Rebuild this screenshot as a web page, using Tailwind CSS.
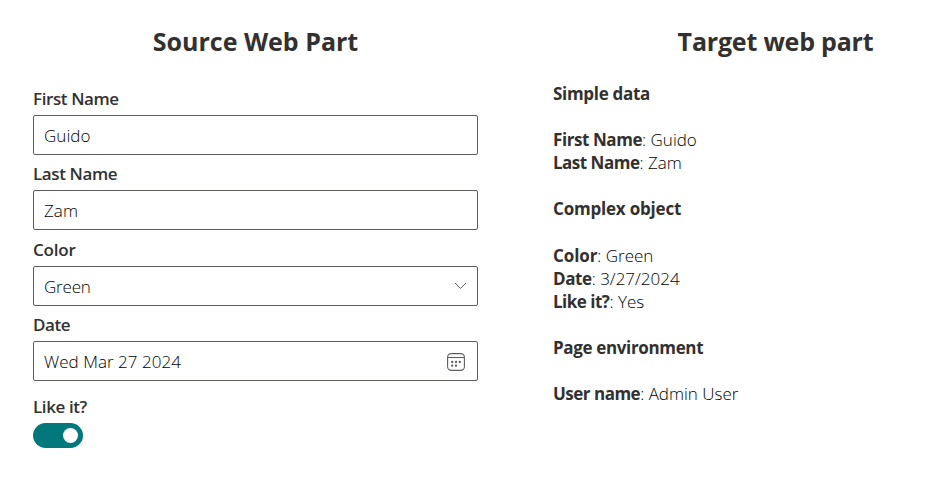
<!DOCTYPE html>
<html lang="en"><head><meta charset="utf-8"><title>Web parts</title>
<script src="https://cdn.jsdelivr.net/npm/@tailwindcss/browser@4"></script></head>
<body class="bg-white font-['Open_Sans','Noto_Sans',sans-serif] text-[#323130]">
<main class="flex h-[482px] w-[938px] overflow-hidden text-[17px]">
<section class="ml-[33px] w-[445px] shrink-0 pt-[23px]">
<h1 class="mb-[21px] text-center text-[25px] leading-[36px] font-bold whitespace-nowrap">Source Web Part</h1>
<form>
<label class="block h-[35px] pt-[7px] leading-[24px] font-semibold tracking-[-0.4px]" for="first">First Name</label>
<input id="first" value="Guido" class="block h-[40px] w-full rounded-[2px] border border-[#605e5c] px-[10px] font-light tracking-[0.05px] text-black">
<label class="block h-[35px] pt-[7px] leading-[24px] font-semibold tracking-[-0.4px]" for="last">Last Name</label>
<input id="last" value="Zam" class="block h-[40px] w-full rounded-[2px] border border-[#605e5c] px-[10px] font-light tracking-[0.05px] text-black">
<div class="h-[36px] pt-[8px] leading-[24px] font-semibold tracking-[-0.2px]">Color</div>
<div class="flex h-[40px] items-center justify-between rounded-[2px] border border-[#605e5c] px-[10px] font-light tracking-[-0.2px] text-black"><span class="pt-px">Green</span>
<svg width="13" height="8" viewBox="0 0 13 8" fill="none" stroke="#605e5c"><path d="M1 1l5.5 5.5L12 1"/></svg></div>
<div class="h-[35px] pt-[7px] leading-[24px] font-semibold tracking-[-0.4px]">Date</div>
<div class="flex h-[40px] items-center justify-between rounded-[2px] border border-[#605e5c] pr-[12px] pl-[10px] font-light tracking-[0.04px] text-black"><span class="pt-px">Wed Mar 27 2024</span>
<svg width="18" height="18" viewBox="0 0 18 18" fill="none" stroke="#605e5c" stroke-width="1.1" class="mt-[2px]"><rect x=".6" y=".6" width="16.8" height="16.8" rx="3.6"/><path d="M1 4.5h16"/><g fill="#605e5c" stroke="none"><circle cx="5.2" cy="9" r="1.15"/><circle cx="9" cy="9" r="1.15"/><circle cx="12.8" cy="9" r="1.15"/><circle cx="5.2" cy="12.7" r="1.15"/><circle cx="9" cy="12.7" r="1.15"/></g></svg></div>
<div class="h-[42px] pt-[14px] leading-[24px] font-semibold tracking-[-0.4px]">Like it?</div>
<button type="button" aria-label="Like it?" class="flex h-[25px] w-[50px] items-center justify-end rounded-full bg-[#03787c] pr-[5px]"><span class="size-[15px] rounded-full bg-white"></span></button>
</form>
</section>
<section class="ml-[75px] w-[445px] shrink-0 pt-[23px]">
<h1 class="mb-[23px] text-center text-[25px] leading-[36px] font-bold tracking-[-0.2px] whitespace-nowrap">Target web part</h1>
<div class="leading-[23.1px] font-light tracking-[0px] text-black">
<h2 class="mb-[23.1px] font-bold tracking-[-0.3px] text-[#323130]">Simple data</h2>
<p><b class="font-bold tracking-[-0.42px] text-[#323130]">First Name</b>: Guido</p><p><b class="font-bold tracking-[-0.5px] text-[#323130]">Last Name</b>: Zam</p>
<h2 class="my-[23.1px] font-bold tracking-[-0.2px] text-[#323130]">Complex object</h2>
<p><b class="font-bold tracking-[-0.1px] text-[#323130]">Color</b>: Green</p><p><b class="font-bold tracking-[-0.4px] text-[#323130]">Date</b>: 3/27/2024</p><p><b class="font-bold tracking-[-0.5px] text-[#323130]">Like it?</b>: Yes</p>
<h2 class="my-[23.1px] font-bold tracking-[-0.35px] text-[#323130]">Page environment</h2>
<p><b class="font-bold tracking-[-0.5px] text-[#323130]">User name</b>: Admin User</p>
</div></section>
</main></body></html>
